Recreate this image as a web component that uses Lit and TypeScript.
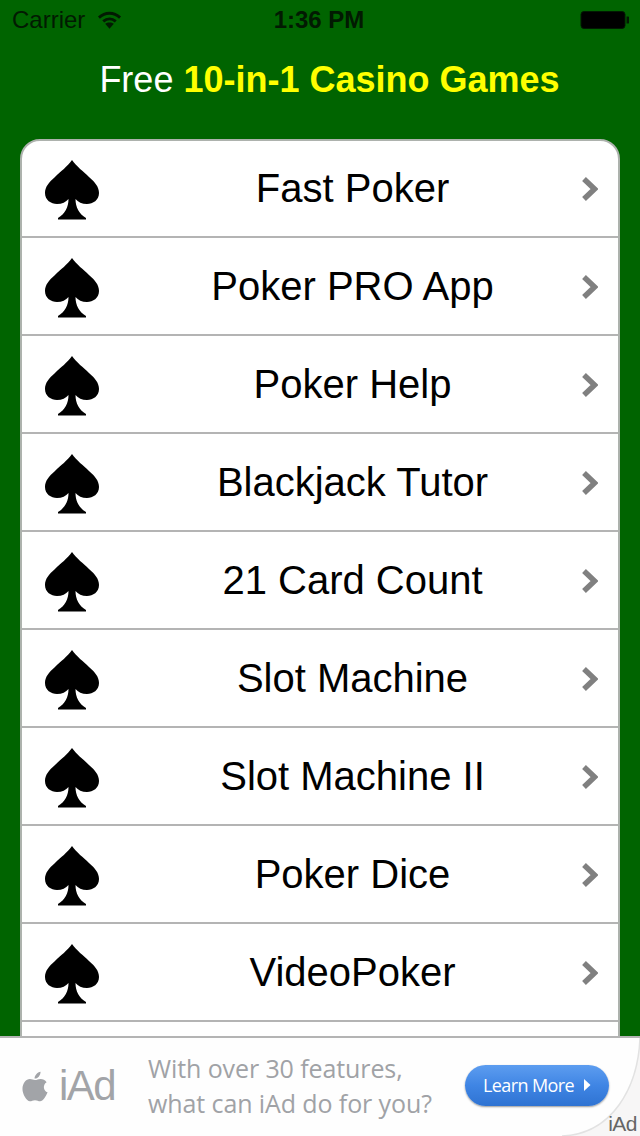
import { LitElement, html, css, svg } from "lit";
import { customElement } from "lit/decorators.js";

const GAMES = [
  "Fast Poker",
  "Poker PRO App",
  "Poker Help",
  "Blackjack Tutor",
  "21 Card Count",
  "Slot Machine",
  "Slot Machine II",
  "Poker Dice",
  "VideoPoker",
  "",
];

const spade = svg`<path d="M28 0C33 7 39 11 45 17C51 22 55 27 55 33C55 40 49 44 43 44C38 44 34 42 31.500 39C31.500 47 35 54 42 58L42 59.500L14 59.500L14 58C21 54 24.500 47 24.500 39C22 42 18 44 13 44C7 44 1 40 1 33C1 27 5 22 11 17C17 11 23 7 28 0Z" fill="#000"/>`;

@customElement("app-root")
export class AppRoot extends LitElement {
  static styles = css`
    :host {
      display: flex;
      flex-direction: column;
      width: 640px;
      height: 1136px;
      overflow: hidden;
      background: #006400;
      font-family: "Liberation Sans", Arial, sans-serif;
    }
    .status {
      height: 40px;
      flex: none;
      display: grid;
      grid-template-columns: 1fr auto 1fr;
      align-items: center;
      padding: 0 12px;
      font-size: 24px;
      color: #021a02;
    }
    .status-left {
      display: flex;
      align-items: center;
      gap: 12px;
    }
    .status-left svg {
      width: 25px;
    }
    .time {
      font-weight: bold;
      margin-right: 2px;
    }
    .battery {
      justify-self: end;
      display: block;
      margin-right: -2px;
    }
    .title {
      height: 80px;
      flex: none;
      display: flex;
      justify-content: center;
      align-items: center;
      gap: 0.28em;
      font-size: 36px;
      color: #fff;
      padding-bottom: 1px;
      padding-left: 19px;
    }
    .title b {
      color: #ff0;
    }
    .main {
      flex: 1;
      min-height: 0;
      overflow: hidden;
      padding: 18px 20px 0;
    }
    .card {
      background: #fff;
      border: 2px solid #adb2ad;
      border-radius: 20px;
    }
    .row {
      height: 95px;
      padding-top: 1px;
      display: flex;
      align-items: center;
      padding-left: 22px;
      border-bottom: 2px solid #b4b4b4;
    }
    .row:first-child {
      height: 94px;
    }
    .row:first-child .name {
      margin-bottom: 2px;
    }
    .row:last-child {
      border-bottom: none;
    }
    .spade {
      flex: none;
      width: 56px;
      height: 60px;
      margin-top: 2px;
      display: block;
    }
    .name {
      flex: 1;
      text-align: center;
      padding-left: 24px;
      font-size: 40px;
      color: #000;
    }
    .chev {
      flex: none;
      width: 17px;
      height: 26px;
      margin-right: 20px;
      display: block;
    }
    .ad {
      position: relative;
      flex: none;
      height: 100px;
      box-sizing: border-box;
      border-top: 2px solid #b4b4b4;
      padding-bottom: 2px;
      background: #fefefe;
      display: flex;
      align-items: center;
      overflow: hidden;
    }
    .ad-logo {
      flex: none;
      display: flex;
      align-items: center;
      gap: 11px;
      margin-left: 22px;
      width: 126px;
      color: #a2a4a8;
      font-size: 42px;
      letter-spacing: -1.5px;
    }
    .ad-text {
      flex: none;
      width: 317px;
      font-family: "Open Sans", sans-serif;
      font-weight: 500;
      font-size: 25px;
      line-height: 35px;
      color: #a0a2a6;
      letter-spacing: -0.1px;
    }
    .learn {
      flex: none;
      width: 144px;
      height: 41px;
      margin-top: -2px;
      box-sizing: border-box;
      border-radius: 21px;
      background: linear-gradient(#5d9df0 0%, #3f85e4 50%, #2f73d2 100%);
      box-shadow: 0 1px 2px rgba(0, 0, 0, 0.4);
      display: flex;
      align-items: center;
      justify-content: center;
      gap: 9px;
      color: #fff;
      font-family: "Open Sans", sans-serif;
      font-size: 18px;
      letter-spacing: -0.6px;
    }
    .curl {
      position: absolute;
      right: 0;
      bottom: 0;
      display: block;
    }
    .mini {
      position: absolute;
      right: 3px;
      bottom: 0;
      font-size: 21px;
      line-height: 24px;
      letter-spacing: -0.5px;
      color: #666;
    }
  `;

  render() {
    return html`
      <div class="status">
        <div class="status-left">
          <span>Carrier</span>
          <svg height="20" viewBox="0 0 26 20">
            <path d="M2 7.500C8.500 1.500 17.500 1.500 24 7.500" fill="none" stroke="#021a02" stroke-width="3"/>
            <path d="M6.500 11.500C10.500 8 15.500 8 19.500 11.500" fill="none" stroke="#021a02" stroke-width="3"/>
            <path d="M8.500 14L13 19L17.500 14C15 12 11 12 8.500 14Z" fill="#021a02"/>
          </svg>
        </div>
        <span class="time">1:36 PM</span>
        <svg class="battery" width="50" height="20" viewBox="0 0 50 20">
          <rect x="1" y="1.500" width="44" height="17" rx="3" fill="#000" stroke="#021a02"/>
          <path d="M46.500 6.500H48C49 6.500 49 7 49 8V12C49 13 49 13.500 48 13.500H46.500Z" fill="#021a02"/>
        </svg>
      </div>
      <div class="title"><span>Free</span><b>10-in-1 Casino Games</b></div>
      <div class="main">
        <div class="card">
          ${GAMES.map(
            (g) => html`
              <div class="row">
                <svg class="spade" viewBox="0 0 56 60">${spade}</svg>
                <span class="name">${g}</span>
                <svg class="chev" viewBox="0 0 17 26">
                  <path d="M3 3L13.500 13L3 23" fill="none" stroke="#808080" stroke-width="5.500"/>
                </svg>
              </div>
            `
          )}
        </div>
      </div>
      <div class="ad">
        <svg class="curl" width="78" height="98" viewBox="0 0 78 98">
          <path d="M78 0C76 50 50 96 0 98L78 98Z" fill="#f7f6f6"/>
          <path d="M78 0C76 50 50 96 0 98" fill="none" stroke="#e2e2e2" stroke-width="1.500"/>
        </svg>
        <div class="ad-logo">
          <svg width="26" height="33" viewBox="0 0 28 34">
            <path d="M20 1C20 5 17 8.500 13.500 8.500C13.500 5 16.500 1.500 20 1ZM14 10C16 10 17.500 8.800 20 8.800C22.500 8.800 25 10 26.500 12.300C22 15 23 21.500 27.500 23.300C26 27.500 22.500 33 19.500 33C17.500 33 16.500 31.700 14 31.700C11.500 31.700 10.500 33 8.500 33C5 33 0.500 25.500 0.500 19.500C0.500 13.500 4.500 9 8.500 9C10.800 9 12.300 10 14 10Z" fill="#a2a4a8"/>
          </svg>
          <span>iAd</span>
        </div>
        <div class="ad-text">With over 30 features,<br />what can iAd do for you?</div>
        <div class="learn">
          <span>Learn More</span>
          <svg width="8" height="14" viewBox="0 0 8 14"><path d="M1 1L7.500 7L1 13Z" fill="#fff"/></svg>
        </div>
        <span class="mini">iAd</span>
      </div>
    `;
  }
}
